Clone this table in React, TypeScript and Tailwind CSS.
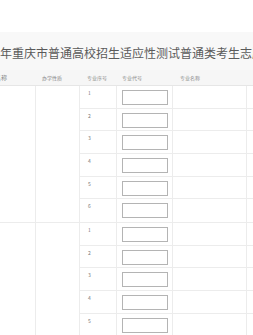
import React from "react";

const font = { fontFamily: '"Noto Sans CJK SC", "Liberation Sans", sans-serif' };

function MajorRow({ n }: { n: number }) {
  return (
    <div className="flex h-[22.67px] border-b border-[#ececec]">
      <div className="w-[37px] shrink-0 border-r border-[#ececec] pl-[8px] pt-[4px] text-[5px] leading-[6px] text-[#777]">
        {n}
      </div>
      <div className="w-[56px] shrink-0 border-r border-[#ececec] pl-[5px] pt-[4px]">
        <div className="h-[15px] w-[46px] border border-[#b4b4b4] bg-white" />
      </div>
      <div className="w-[74px] shrink-0 border-r border-[#ececec]" />
      <div className="w-[40px] shrink-0" />
    </div>
  );
}

function Group({ rows }: { rows: number }) {
  return (
    <div className="flex border-b border-[#ececec]">
      <div className="w-[36px] shrink-0 border-r border-[#ececec]" />
      <div className="w-[44px] shrink-0 border-r border-[#ececec]" />
      <div className="flex flex-col">
        {Array.from({ length: rows }, (_, i) => (
          <div key={i} className={i === rows - 1 ? "[&>div]:border-b-0" : ""}>
            <MajorRow n={i + 1} />
          </div>
        ))}
      </div>
    </div>
  );
}

export default function App() {
  return (
    <div className="h-[335px] w-[253px] overflow-hidden bg-white" style={font}>
      <div className="h-[32px]" />
      <div className="flex h-[38px] items-center overflow-hidden whitespace-nowrap bg-[#f8f8f8] pt-[4px]">
        <span className="ml-[0px] text-[12px] leading-[14px] text-[#5a5a5a]">
          年重庆市普通高校招生适应性测试普通类考生志愿表
        </span>
      </div>
      <div className="flex h-[16px] items-center overflow-hidden whitespace-nowrap border-b border-[#e6e6e6] bg-[#f6f6f6] text-[5px] text-[#888]">
        <div className="w-[36px] shrink-0 overflow-hidden">
          <span className="ml-[-17px] block text-[6px]">院校名称</span>
        </div>
        <div className="w-[44px] shrink-0 pl-[6px] text-[5px]">办学性质</div>
        <div className="w-[37px] shrink-0 pl-[7px] text-[5px]">专业序号</div>
        <div className="w-[56px] shrink-0 pl-[5px] text-[5px]">专业代号</div>
        <div className="w-[74px] shrink-0 pl-[7px] text-[5px]">专业名称</div>
      </div>
      <Group rows={6} />
      <Group rows={6} />
    </div>
  );
}
